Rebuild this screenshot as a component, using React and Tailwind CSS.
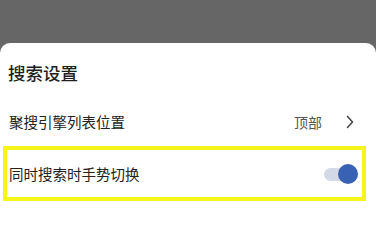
import React from "react";

export default function App() {
  const font = { fontFamily: '"Noto Sans CJK SC", "Noto Sans", sans-serif' };

  return (
    <div className="w-[376px] h-[218px] overflow-hidden bg-[#666666]" style={font}>
      <div className="mt-[43px] h-[175px] bg-white rounded-t-[10px]">
        {/* sheet title */}
        <div className="pt-[18px] pl-[8px] text-[17.5px] leading-[24px] font-medium text-[#1f1f1f]">
          搜索设置
        </div>

        {/* engine list position */}
        <div className="mt-[12px] h-[50px] flex items-center pl-[9px] pr-[22px]">
          <span className="text-[14.5px] text-[#222]">聚搜引擎列表位置</span>
          <span className="ml-auto text-[14px] text-[#555]">顶部</span>
          <svg width="8" height="14" viewBox="0 0 8 14" className="ml-[24px]">
            <path d="M1.5 1.5 L6.5 7 L1.5 12.5" fill="none" stroke="#444" strokeWidth="1.5" strokeLinecap="round" strokeLinejoin="round" />
          </svg>
        </div>

        {/* gesture switch row, highlighted */}
        <div className="relative mt-[1px] h-[52px] flex items-center pl-[9px] pr-[18px]">
          <span className="text-[14.5px] text-[#222]">同时搜索时手势切换</span>
          <div className="ml-auto relative w-[34px] h-[20px] flex items-center">
            <div className="w-[30px] h-[13px] rounded-full bg-[#d3d9e6]" />
            <div className="absolute right-0 top-0 w-[20px] h-[20px] rounded-full bg-[#3a62b4]" />
          </div>
          <div className="absolute left-[3px] right-[10px] top-[-2px] bottom-[-1px] border-[4px] border-[#f6f51a] pointer-events-none" />
        </div>
      </div>
    </div>
  );
}
